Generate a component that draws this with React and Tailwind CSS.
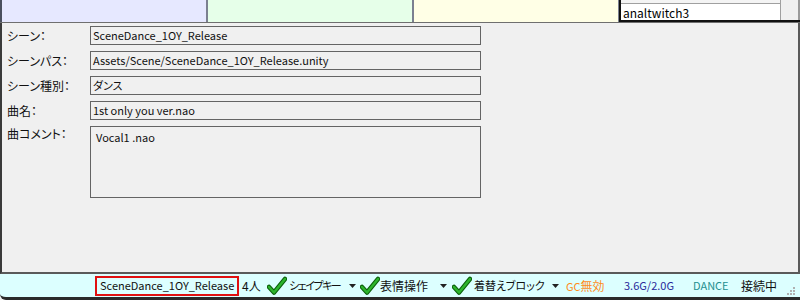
import React from "react";

const Check = () => (
    <svg width="20" height="20" viewBox="0 0 20 20" className="shrink-0">
        <path d="M2 11 L7 16.5 L18 3" fill="none" stroke="#0b5f0b" strokeWidth="4.5" strokeLinecap="round" strokeLinejoin="round" />
        <path d="M2 11 L7 16.5 L18 3" fill="none" stroke="#2cb52c" strokeWidth="2.5" strokeLinecap="round" strokeLinejoin="round" />
    </svg>
);

const Caret = () => (
    <svg width="7" height="4" viewBox="0 0 7 4" className="shrink-0">
        <path d="M0 0 H7 L3.5 4 Z" fill="#222" />
    </svg>
);

const Field = ({ label, value }) => (
    <div className="flex items-center h-[19px]">
        <div className="w-[88px] pl-[5px] text-[12px] text-[#111]">{label}</div>
        <div className="w-[391px] h-[19px] border border-[#646464] bg-[#f0f0f0] pl-[2px] text-[11px] leading-[17px] text-[#111] whitespace-nowrap">
            {value}
        </div>
    </div>
);

export default function App() {
    return (
        <div className="w-[800px] h-[300px] flex flex-col bg-[#f0f0f0] overflow-hidden font-['Noto_Sans_CJK_JP',sans-serif] [font-feature-settings:'palt']">
            {/* top strip */}
            <div className="flex h-[22px] shrink-0 border-l-2 border-[#4a4f5e]">
                <div className="w-[204px] bg-[#e6e8ff]" />
                <div className="w-[2px] bg-[#7b8090]" />
                <div className="w-[204px] bg-[#e6ffe9]" />
                <div className="w-[2px] bg-[#7b8090]" />
                <div className="w-[204px] bg-[#ffffe6]" />
                <div className="w-[1px] bg-[#7b8090]" />
                <div className="flex-1 flex border-l-2 border-b-2 border-[#111]">
                    <div className="w-[160px] bg-white border-r border-[#a0a0a0] flex flex-col">
                        <div className="h-[5px] border-b border-[#a0a0a0] bg-[#f4f4f4]" />
                        <div className="pl-[2px] pt-[2px] text-[12px] leading-[14px] text-black">analtwitch3</div>
                    </div>
                    <div className="flex-1 bg-[#f0f0f0] border-r-2 border-[#9a9a9a]" />
                </div>
            </div>
            <div className="h-[1px] bg-[#6f6f6f] shrink-0" />
            {/* main form */}
            <div className="flex-1 flex flex-col gap-[6px] pt-[3px] border-l-2 border-r-2 border-b-2 border-[#5a5a5a] border-l-[#3a3a3a]">
                <Field label="シーン：" value="SceneDance_1OY_Release" />
                <Field label="シーンパス：" value="Assets/Scene/SceneDance_1OY_Release.unity" />
                <Field label="シーン種別：" value="ダンス" />
                <Field label="曲名：" value="1st only you ver.nao" />
                <div className="flex">
                    <div className="w-[88px] pl-[5px] text-[12px] leading-[15px] text-[#111]">曲コメント：</div>
                    <div className="w-[391px] h-[72px] border border-[#646464] pl-[5px] pt-[2px] text-[11px] text-[#111]">
                        Vocal1 .nao
                    </div>
                </div>
            </div>
            {/* status bar */}
            <div className="h-[26px] shrink-0 flex items-center bg-[#dcffff] border-b-[3px] border-[#2a2a2a] rounded-bl-[6px] text-[12px] text-[#111] whitespace-nowrap">
                <div className="shrink-0 ml-[95px] w-[144px] h-[20px] pl-[3px] border-2 border-[#e01010] flex items-center text-[11px]">SceneDance_1OY_Release</div>
                <span className="shrink-0 ml-[3px] w-[24px]">4人</span>
                <span className="shrink-0 w-[22px] flex justify-center"><Check /></span>
                <span className="shrink-0 w-[61px] pl-[1px] text-[11px] tracking-[-1.5px] overflow-hidden">シェイプキー</span>
                <Caret />
                <span className="shrink-0 ml-[4px] w-[20px]"><Check /></span>
                <span className="shrink-0 w-[60px]">表情操作</span>
                <Caret />
                <span className="shrink-0 ml-[5px] w-[20px]"><Check /></span>
                <span className="shrink-0 w-[80px] pl-[2px] text-[11px]">着替えブロック</span>
                <Caret />
                <span className="shrink-0 ml-[7px] w-[58px] text-[#ff8c1a]"><span className="text-[11px]">GC</span>無効</span>
                <span className="shrink-0 w-[69px] text-[11px] text-[#2a2a9a]">3.6G/2.0G</span>
                <span className="shrink-0 w-[48px] text-[11px] text-[#1e9090]">DANCE</span>
                <span className="shrink-0 w-[40px]">接続中</span>
                <svg width="10" height="10" viewBox="0 0 10 10" className="shrink-0 ml-auto mr-[4px] self-end mb-[1px]">
                    <rect x="7" y="1" width="2" height="2" fill="#b0b0b0" />
                    <rect x="4" y="4" width="2" height="2" fill="#b0b0b0" />
                    <rect x="7" y="4" width="2" height="2" fill="#b0b0b0" />
                    <rect x="1" y="7" width="2" height="2" fill="#b0b0b0" />
                    <rect x="4" y="7" width="2" height="2" fill="#b0b0b0" />
                    <rect x="7" y="7" width="2" height="2" fill="#b0b0b0" />
                </svg>
            </div>
        </div>
    );
}
